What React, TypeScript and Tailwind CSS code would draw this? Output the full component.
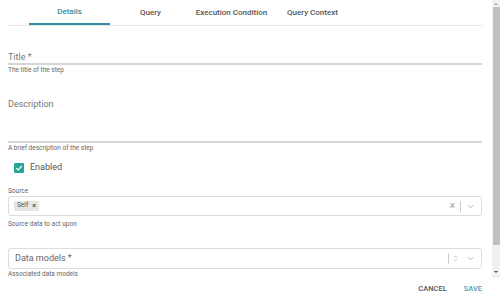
import React from 'react';

const tabs = ['Details', 'Query', 'Execution Condition', 'Query Context'];

const Helper = ({ children }: { children: React.ReactNode }) => (
  <div className="text-[6.5px] leading-[10px] text-[#666]">{children}</div>
);

const Chevron = () => (
  <svg width="9" height="9" viewBox="0 0 10 10" className="text-[#aaa]">
    <path d="M2 3.5 L5 6.5 L8 3.5" fill="none" stroke="currentColor" strokeWidth="1" />
  </svg>
);

export default function App() {
  return (
    <div className="w-[500px] h-[299px] bg-white flex flex-col font-['Roboto',sans-serif] overflow-hidden">
      <div className="flex h-[278px]">
        {/* form column */}
        <div className="flex-1 pl-2 pr-[10px]">
          <div className="flex h-[26px] border-b border-[#e8e8e8] pl-[21px]">
            {tabs.map((t, i) => (
              <div
                key={t}
                className={`w-[81px] flex items-center justify-center text-[8px] font-medium ${
                  i === 0 ? 'text-[#2f8ea0] border-b-2 border-[#2f8ea0]' : 'text-[#555]'
                }`}
              >
                {t}
              </div>
            ))}
          </div>

          {/* Title */}
          <div className="mt-[25px] border-b-2 border-[#d6d6d6] h-[14px]">
            <div className="text-[9px] leading-[12px] text-[#777]">Title *</div>
          </div>
          <Helper>The title of the step</Helper>

          {/* Description */}
          <div className="mt-[23px] border-b-2 border-[#d6d6d6] h-[45px]">
            <div className="text-[9px] leading-[12px] text-[#777]">Description</div>
          </div>
          <Helper>A brief description of the step</Helper>

          {/* Enabled */}
          <div className="flex items-center gap-[6px] mt-[9px] ml-[6px] h-[12px]">
            <div className="w-[10px] h-[10px] bg-[#26a69a] rounded-[1px] flex items-center justify-center">
              <svg width="8" height="8" viewBox="0 0 10 10">
                <path d="M1.5 5.2 L4 7.5 L8.5 2.5" fill="none" stroke="white" strokeWidth="1.5" />
              </svg>
            </div>
            <span className="text-[9px] text-[#555]">Enabled</span>
          </div>

          {/* Source */}
          <div className="mt-[13px] text-[6.5px] leading-[9px] text-[#666]">Source</div>
          <div className="h-[20px] border border-[#ddd] rounded-[3px] flex items-center pl-[5px] pr-[6px]">
            <div className="h-[10px] bg-[#e6e6e6] rounded-[1px] flex items-center px-[3px] gap-[4px] text-[6.5px] text-[#555]">
              <span>Self</span>
              <span className="font-bold text-[7px] leading-none">×</span>
            </div>
            <div className="flex-1" />
            <span className="text-[#999] text-[10px] leading-none">×</span>
            <div className="w-px h-[11px] bg-[#ccc] mx-[5px]" />
            <Chevron />
          </div>
          <div className="mt-[3px]">
            <Helper>Source data to act upon</Helper>
          </div>

          {/* Data models */}
          <div className="mt-[19px] h-[21px] border border-[#ddd] rounded-[3px] flex items-center pl-[6px] pr-[6px]">
            <span className="text-[9px] text-[#666]">Data models *</span>
            <div className="flex-1" />
            <div className="w-px h-[11px] bg-[#ccc] mr-[3px]" />
            <svg width="7" height="9" viewBox="0 0 8 10" className="text-[#aaa] mr-[7px]">
              <path d="M2 4 L4 2 L6 4 M2 6 L4 8 L6 6" fill="none" stroke="currentColor" strokeWidth="0.8" />
            </svg>
            <Chevron />
          </div>
          <Helper>Associated data models</Helper>
        </div>

        {/* scrollbar */}
        <div className="w-[8px] bg-[#f1f1f1] flex flex-col items-center">
          <div className="h-[7px] flex items-center justify-center">
            <div className="w-0 h-0 border-l-[2px] border-r-[2px] border-b-[2px] border-l-transparent border-r-transparent border-b-[#a3a3a3]" />
          </div>
          <div className="w-[7px] h-[238px] bg-[#c1c1c1]" />
          <div className="flex-1" />
          <div className="h-[12px] flex items-center justify-center">
            <div className="w-0 h-0 border-l-[2px] border-r-[2px] border-t-[2px] border-l-transparent border-r-transparent border-t-[#505050]" />
          </div>
        </div>
      </div>

      {/* footer */}
      <div className="flex-1 flex items-center justify-end gap-[17px] pr-[18px] text-[7.5px] font-medium">
        <span className="text-[#555]">CANCEL</span>
        <span className="text-[#4aa3b5]">SAVE</span>
      </div>
    </div>
  );
}
